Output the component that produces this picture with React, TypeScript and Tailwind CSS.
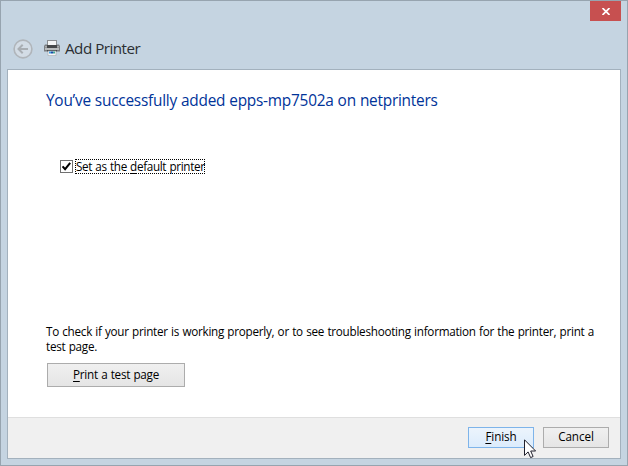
import React from "react";

function BackIcon() {
  return (
    <svg width="20" height="20" viewBox="0 0 20 20" fill="none">
      <circle cx="10" cy="10" r="8.9" fill="#d3dce5" stroke="#b0b5ba" strokeWidth="1.6" />
      <path d="M15 10H6M9.7 5.8L5.5 10l4.2 4.2" stroke="#a9aeb3" strokeWidth="2" />
    </svg>
  );
}

function PrinterIcon() {
  return (
    <svg width="16" height="16" viewBox="0 0 16 16">
      <path d="M1 4.5h14l1 1.5v5.5H0V6z" fill="#7b7f82" />
      <rect x="1" y="6" width="14" height="1.5" fill="#a9acae" />
      <rect x="3.5" y="0.5" width="9" height="5" fill="#f4f5f5" stroke="#8b8e91" />
      <rect x="3" y="5" width="10" height="3" fill="#454749" />
      <rect x="1" y="8" width="14" height="2" fill="#b9bcbd" />
      <rect x="3" y="10" width="10" height="1.5" fill="#4a4c4e" />
      <path d="M4 11h8v4.6H4z" fill="#f8f8f8" stroke="#a0a4a7" strokeWidth=".6" />
      <rect x="5" y="11.5" width="2" height="2" fill="#3d9be0" />
      <rect x="7" y="11.5" width="2" height="2" fill="#174ba5" />
      <rect x="9" y="11.5" width="2" height="2" fill="#42a69a" />
    </svg>
  );
}

export default function App() {
  return (
    <div className="relative flex h-[466px] w-[628px] flex-col border border-[#97a4af] bg-[#c5d4e1] px-1.5 pb-1.5 font-['Open_Sans',sans-serif] text-[11.7px] text-black">
      <header className="flex h-[68px] shrink-0 flex-col">
        <button aria-label="Close" className="flex h-5 w-[31px] shrink-0 items-center justify-center self-end bg-[#c75050]">
          <svg className="mt-px" width="8" height="7" viewBox="0 0 8 7" stroke="white" strokeWidth="1.7">
            <path d="M.5 0l7 7M7.5 0l-7 7" />
          </svg>
        </button>
        <div className="mt-[18px] flex h-5 items-center pl-1.5">
          <BackIcon />
          <span className="ml-[11px] flex pb-0.5"><PrinterIcon /></span>
          <h1 className="mb-0.5 ml-[5px] text-[15.2px] leading-[18px] tracking-[-0.5px] text-[#2b2f33]">Add Printer</h1>
        </div>
      </header>
      <main className="flex min-h-0 flex-1 flex-col border border-[#a3b1bd] bg-white">
        <section className="flex min-h-0 flex-1 flex-col items-start pl-[38px] pt-5">
          <h2 className="whitespace-nowrap text-[15.4px] leading-[22px] tracking-[-0.24px] [word-spacing:0.3px] text-[#003399]">You’ve successfully added epps-mp7502a on netprinters</h2>
          <label className="ml-3.5 mt-[47px] flex h-[15px] items-center">
            <span className="flex size-[13px] items-center justify-center border border-[#707070]">
              <svg width="9" height="9" viewBox="0 0 9 9" fill="none" stroke="black" strokeWidth="2">
                <path d="M.6 4.3l2.5 2.8L8.2.8" />
              </svg>
            </span>
            <span className="ml-0.5 flex h-[15px] w-[130px] items-center border border-dotted border-black whitespace-nowrap tracking-[-0.33px] [word-spacing:0.5px]">
              <span>Set as the <u className="underline-offset-2">d</u>efault printer</span>
            </span>
          </label>
          <p className="mt-[150px] whitespace-nowrap leading-[15px] tracking-[-0.255px] [word-spacing:0.5px]">
            To check if your printer is working properly, or to see troubleshooting information for the printer, print a<br />test page.
          </p>
          <button className="ml-px mt-[9px] h-6 w-[138px] shrink-0 border border-[#acacac] bg-linear-to-b from-[#f0f0f0] to-[#e5e5e5] tracking-[-0.25px] [word-spacing:0.5px]">
            <u className="underline-offset-2">P</u>rint a test page
          </button>
        </section>
        <footer className="flex h-[41px] shrink-0 justify-end gap-[9px] border-t border-[#dfdfdf] bg-[#f0f0f0] pr-[11px] pt-[9px]">
          <button className="h-[21px] w-[66px] border border-[#7eb4ea] bg-linear-to-b from-[#ecf4fc] to-[#dcecfc] pb-0.5 leading-[17px] tracking-[-0.1px]">
            <u className="underline-offset-2">F</u>inish
          </button>
          <button className="h-[21px] w-[66px] border border-[#acacac] bg-linear-to-b from-[#f0f0f0] to-[#e5e5e5] pb-0.5 leading-[17px] tracking-[-0.1px]">Cancel</button>
        </footer>
      </main>
      <svg className="absolute left-[523px] top-[438px]" width="13" height="20" viewBox="0 0 13 20">
        <path d="M.5.8v15.6l3.6-3.5 2.5 5.7 2.5-1.1-2.4-5.5h4.9z" fill="white" stroke="#20202c" />
      </svg>
    </div>
  );
}
